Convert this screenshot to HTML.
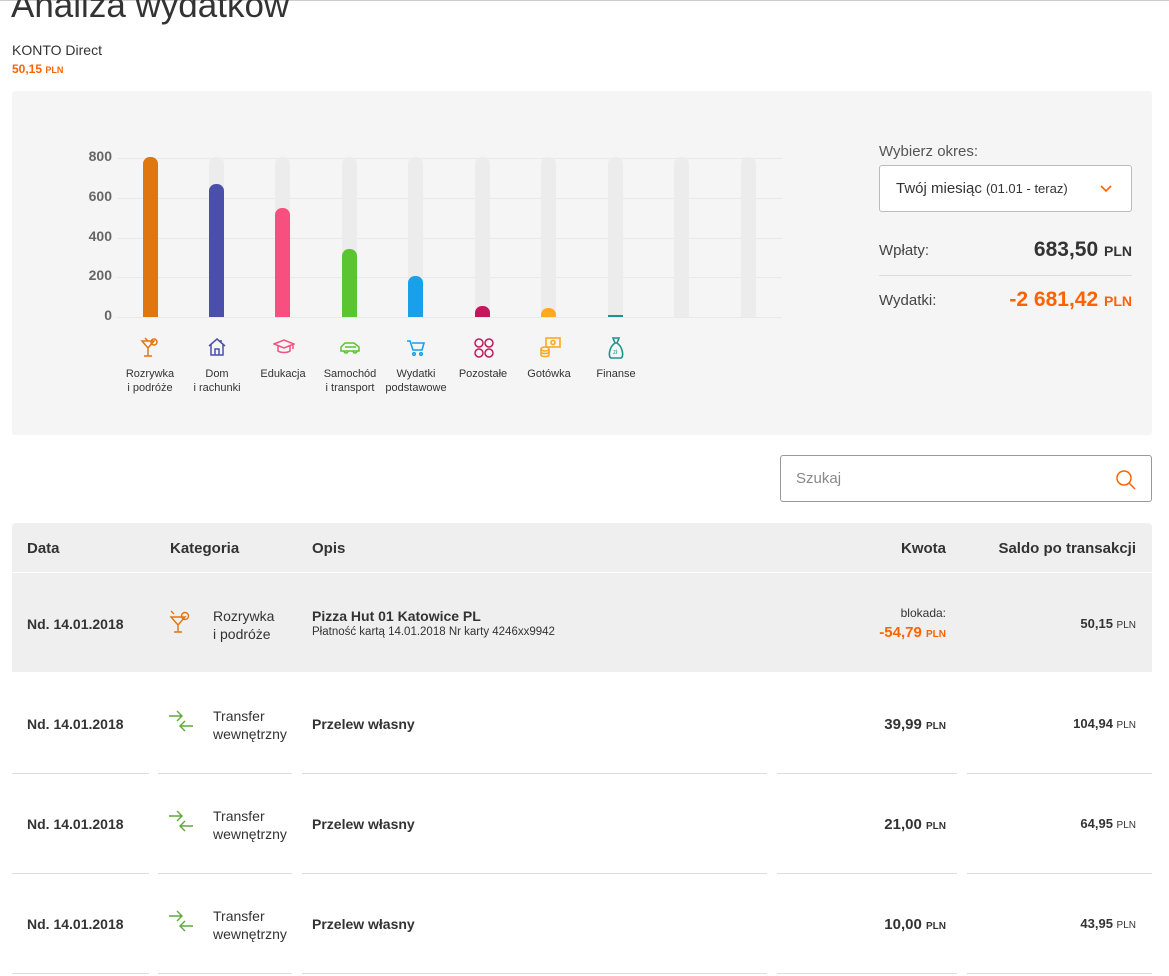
<!DOCTYPE html>
<html><head><meta charset="utf-8">
<style>
*{margin:0;padding:0;box-sizing:border-box}
body{width:1169px;height:976px;overflow:hidden;background:#fff;font-family:"Liberation Sans",sans-serif;color:#333;position:relative}
.a{position:absolute}
.t{position:absolute;white-space:nowrap}
.or{color:#ff6200}
.pln{font-size:10px;font-weight:bold}
.grid{position:absolute;left:117px;width:665px;height:1px;background:#e9e9e9}
.bg{position:absolute;width:15px;top:157px;height:160px;background:#ececec;border-radius:7px 7px 0 0}
.bar{position:absolute;width:15px;bottom:659px;border-radius:7px 7px 0 0}
.yl{position:absolute;left:70px;width:42px;text-align:right;font-size:14px;font-weight:bold;color:#666}
.cl{position:absolute;width:80px;text-align:center;font-size:11px;line-height:14px;color:#333}
.sep{position:absolute;height:1px;background:#ddd}
.b{font-weight:bold}
</style></head><body>
<div class="a" style="left:0;top:0;width:1169px;height:1px;background:#ccc"></div>
<div class="t" style="left:11px;top:-14px;font-size:35px;color:#333">Analiza wydatków</div>
<div class="t" style="left:12px;top:42px;font-size:14px;">KONTO Direct</div>
<div class="t or b" style="left:12px;top:62px;font-size:12px;">50,15 <span style="font-size:9px">PLN</span></div>

<div class="a" style="left:12px;top:91px;width:1140px;height:344px;background:#f5f5f5;border-radius:3px"></div>
<div class="grid" style="top:158px"></div><div class="grid" style="top:198px"></div><div class="grid" style="top:238px"></div><div class="grid" style="top:277px"></div><div class="grid" style="top:317px"></div>
<div class="yl" style="top:148px">800</div><div class="yl" style="top:188px">600</div><div class="yl" style="top:228px">400</div><div class="yl" style="top:267px">200</div><div class="yl" style="top:307px">0</div>

<div class="bg" style="left:143px"></div><div class="bg" style="left:209px"></div><div class="bg" style="left:275px"></div><div class="bg" style="left:342px"></div><div class="bg" style="left:408px"></div><div class="bg" style="left:475px"></div><div class="bg" style="left:541px"></div><div class="bg" style="left:608px"></div><div class="bg" style="left:674px"></div><div class="bg" style="left:741px"></div>
<div class="bar" style="left:143px;height:160px;background:#e07610"></div>
<div class="bar" style="left:209px;height:133px;background:#4a50aa"></div>
<div class="bar" style="left:275px;height:109px;background:#f74f80"></div>
<div class="bar" style="left:342px;height:68px;background:#5bc531"></div>
<div class="bar" style="left:408px;height:41px;background:#1aa0ea"></div>
<div class="bar" style="left:475px;height:11px;background:#c2185b"></div>
<div class="bar" style="left:541px;height:9px;background:#ffa820"></div>
<div class="bar" style="left:608px;height:2px;background:#19958e;border-radius:0"></div>

<svg class="a" style="left:140px;top:337px" width="20" height="22" viewBox="0 0 20 22" fill="none" stroke="#e07610" stroke-width="1.5"><path d="M2 4h12l-6 7zM8 11v8M4 19h8M5 1l3 3"/><circle cx="14" cy="5" r="3"/></svg>
<svg class="a" style="left:207px;top:337px" width="20" height="20" viewBox="0 0 20 20" fill="none" stroke="#4a50aa" stroke-width="1.5"><path d="M2 9l8-7 8 7M4 7v11h12V7M8 18v-6h4v6M14 3v3"/></svg>
<svg class="a" style="left:273px;top:339px" width="22" height="16" viewBox="0 0 22 16" fill="none" stroke="#f74f80" stroke-width="1.5"><path d="M1 5l10-4 10 4-10 4zM5 7v5c3 2 9 2 12 0V7M20 5v5"/></svg>
<svg class="a" style="left:339px;top:341px" width="22" height="14" viewBox="0 0 22 14" fill="none" stroke="#5bc531" stroke-width="1.5"><path d="M2 10V6l4-4h9l5 4v4zM5 10a2 2 0 004 0M14 10a2 2 0 004 0M6 6h11"/></svg>
<svg class="a" style="left:406px;top:339px" width="20" height="18" viewBox="0 0 20 18" fill="none" stroke="#1aa0ea" stroke-width="1.6"><path d="M1 2h3l3 9h9l2-7H6"/><circle cx="8" cy="15" r="1.3"/><circle cx="15" cy="15" r="1.3"/></svg>
<svg class="a" style="left:473px;top:337px" width="22" height="22" viewBox="0 0 22 22" fill="none" stroke="#c2185b" stroke-width="1.5"><circle cx="6" cy="6" r="4"/><circle cx="16" cy="6" r="4"/><circle cx="6" cy="16" r="4"/><circle cx="16" cy="16" r="4"/></svg>
<svg class="a" style="left:539px;top:336px" width="24" height="24" viewBox="0 0 24 24" fill="none" stroke="#ffa820" stroke-width="1.6"><rect x="7" y="2" width="14" height="9"/><circle cx="14" cy="6.5" r="2"/><ellipse cx="6" cy="13" rx="4" ry="2"/><path d="M2 13v6c0 2 8 2 8 0v-6M2 16c0 2 8 2 8 0"/></svg>
<svg class="a" style="left:607px;top:336px" width="18" height="24" viewBox="0 0 18 24" fill="none" stroke="#19958e" stroke-width="1.6"><path d="M6 2h6l-2 5h-2zM8 7C2 11 1 21 4 22h10c3-1 2-11-4-15"/><text x="6" y="18" font-size="6" fill="#19958e" stroke="none" font-family="Liberation Sans">zł</text></svg>

<div class="cl" style="left:110px;top:367px">Rozrywka<br>i podróże</div>
<div class="cl" style="left:177px;top:367px">Dom<br>i rachunki</div>
<div class="cl" style="left:243px;top:367px">Edukacja</div>
<div class="cl" style="left:310px;top:367px">Samochód<br>i transport</div>
<div class="cl" style="left:376px;top:367px">Wydatki<br>podstawowe</div>
<div class="cl" style="left:443px;top:367px">Pozostałe</div>
<div class="cl" style="left:509px;top:367px">Gotówka</div>
<div class="cl" style="left:576px;top:367px">Finanse</div>

<div class="t" style="left:879px;top:143px;font-size:15px;color:#555">Wybierz okres:</div>
<div class="a" style="left:879px;top:165px;width:253px;height:47px;background:#fff;border:1px solid #bbb;border-radius:3px"></div>
<div class="t" style="left:896px;top:180px;font-size:15px;">Twój miesiąc <span style="font-size:13px">(01.01 - teraz)</span></div>
<svg class="a" style="left:1100px;top:185px" width="12" height="8" viewBox="0 0 12 8" fill="none" stroke="#ff6200" stroke-width="1.6"><path d="M1 1l5 5 5-5"/></svg>
<div class="t" style="left:879px;top:242px;font-size:15px;color:#444">Wpłaty:</div>
<div class="t b" style="right:37px;top:238px;font-size:21px;color:#333">683,50 <span style="font-size:14px">PLN</span></div>
<div class="a" style="left:879px;top:275px;width:253px;height:1px;background:#ddd"></div>
<div class="t" style="left:879px;top:292px;font-size:15px;color:#444">Wydatki:</div>
<div class="t b or" style="right:37px;top:288px;font-size:21px;">-2 681,42 <span style="font-size:14px">PLN</span></div>

<div class="a" style="left:780px;top:455px;width:372px;height:47px;border:1px solid #999;border-radius:3px"></div>
<div class="t" style="left:796px;top:470px;font-size:15px;color:#888">Szukaj</div>
<svg class="a" style="left:1114px;top:468px" width="24" height="24" viewBox="0 0 24 24" fill="none" stroke="#ff6200" stroke-width="1.5"><circle cx="10" cy="10" r="7"/><path d="M15 15l6 6"/></svg>

<div class="a" style="left:12px;top:523px;width:1140px;height:49px;background:#efefef;border-radius:4px 4px 0 0"></div>
<div class="t b" style="left:27px;top:540px;font-size:15px">Data</div>
<div class="t b" style="left:170px;top:540px;font-size:15px">Kategoria</div>
<div class="t b" style="left:312px;top:540px;font-size:15px">Opis</div>
<div class="t b" style="right:223px;top:540px;font-size:15px">Kwota</div>
<div class="t b" style="right:33px;top:540px;font-size:15px">Saldo po transakcji</div>

<div class="a" style="left:12px;top:573px;width:1140px;height:99px;background:#efefef"></div>
<div class="t b" style="left:27px;top:616px;font-size:14px">Nd. 14.01.2018</div>
<svg class="a" style="left:168px;top:609px" width="24" height="25" viewBox="0 0 24 25" fill="none" stroke="#e07610" stroke-width="1.4"><path d="M3 8h14l-7 8zM10 16v7M6 23h8M3 2l3 3"/><circle cx="17" cy="7" r="3.5"/></svg>
<div class="t" style="left:213px;top:607px;font-size:14px;line-height:18px">Rozrywka<br>i podróże</div>
<div class="t b" style="left:312px;top:608px;font-size:14px">Pizza Hut 01 Katowice PL</div>
<div class="t" style="left:312px;top:626px;font-size:11.5px">Płatność kartą 14.01.2018 Nr karty 4246xx9942</div>
<div class="t" style="right:223px;top:606px;font-size:12px">blokada:</div>
<div class="t b or" style="right:223px;top:624px;font-size:15px">-54,79 <span class="pln">PLN</span></div>
<div class="t b" style="right:33px;top:616px;font-size:13px">50,15 <span class="pln" style="font-weight:normal">PLN</span></div>

<div class="t b" style="left:27px;top:716px;font-size:14px">Nd. 14.01.2018</div>
<svg class="a" style="left:166px;top:708px" width="30" height="26" viewBox="0 0 30 26" fill="none" stroke="#5fa83a" stroke-width="1.4"><path d="M3 8h13M11 3l5 5-5 5M27 18H14M19 13l-5 5 5 5"/></svg>
<div class="t" style="left:213px;top:707px;font-size:14px;line-height:18px">Transfer<br>wewnętrzny</div>
<div class="t b" style="left:312px;top:716px;font-size:14px">Przelew własny</div>
<div class="t b" style="right:223px;top:716px;font-size:15px">39,99 <span class="pln">PLN</span></div>
<div class="t b" style="right:33px;top:716px;font-size:13px">104,94 <span class="pln" style="font-weight:normal">PLN</span></div>

<div class="t b" style="left:27px;top:816px;font-size:14px">Nd. 14.01.2018</div>
<svg class="a" style="left:166px;top:808px" width="30" height="26" viewBox="0 0 30 26" fill="none" stroke="#5fa83a" stroke-width="1.4"><path d="M3 8h13M11 3l5 5-5 5M27 18H14M19 13l-5 5 5 5"/></svg>
<div class="t" style="left:213px;top:807px;font-size:14px;line-height:18px">Transfer<br>wewnętrzny</div>
<div class="t b" style="left:312px;top:816px;font-size:14px">Przelew własny</div>
<div class="t b" style="right:223px;top:816px;font-size:15px">21,00 <span class="pln">PLN</span></div>
<div class="t b" style="right:33px;top:816px;font-size:13px">64,95 <span class="pln" style="font-weight:normal">PLN</span></div>

<div class="t b" style="left:27px;top:916px;font-size:14px">Nd. 14.01.2018</div>
<svg class="a" style="left:166px;top:908px" width="30" height="26" viewBox="0 0 30 26" fill="none" stroke="#5fa83a" stroke-width="1.4"><path d="M3 8h13M11 3l5 5-5 5M27 18H14M19 13l-5 5 5 5"/></svg>
<div class="t" style="left:213px;top:907px;font-size:14px;line-height:18px">Transfer<br>wewnętrzny</div>
<div class="t b" style="left:312px;top:916px;font-size:14px">Przelew własny</div>
<div class="t b" style="right:223px;top:916px;font-size:15px">10,00 <span class="pln">PLN</span></div>
<div class="t b" style="right:33px;top:916px;font-size:13px">43,95 <span class="pln" style="font-weight:normal">PLN</span></div>

<div class="sep" style="left:12px;width:137px;top:773px"></div><div class="sep" style="left:158px;width:134px;top:773px"></div><div class="sep" style="left:302px;width:465px;top:773px"></div><div class="sep" style="left:777px;width:180px;top:773px"></div><div class="sep" style="left:967px;width:185px;top:773px"></div>
<div class="sep" style="left:12px;width:137px;top:873px"></div><div class="sep" style="left:158px;width:134px;top:873px"></div><div class="sep" style="left:302px;width:465px;top:873px"></div><div class="sep" style="left:777px;width:180px;top:873px"></div><div class="sep" style="left:967px;width:185px;top:873px"></div>
<div class="sep" style="left:12px;width:137px;top:973px"></div><div class="sep" style="left:158px;width:134px;top:973px"></div><div class="sep" style="left:302px;width:465px;top:973px"></div><div class="sep" style="left:777px;width:180px;top:973px"></div><div class="sep" style="left:967px;width:185px;top:973px"></div>
</body></html>
